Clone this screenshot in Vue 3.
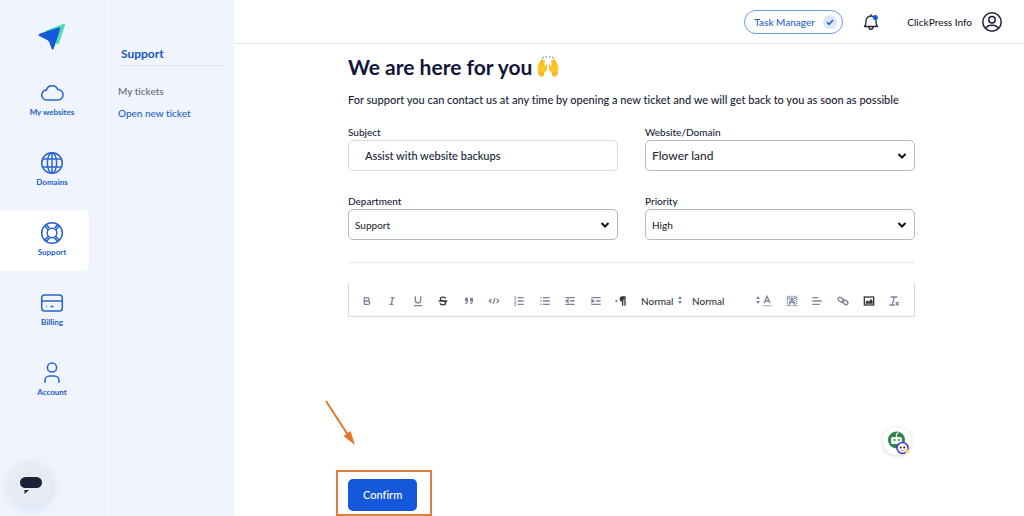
<script setup>
import { ref } from 'vue'

const subject = ref('Assist with website backups')
const message = ref('')

const nav = [
  { label: 'My websites', icon: '<path d="M7 19a5 5 0 0 1-.6-10 6 6 0 0 1 11.4-.4A5.2 5.2 0 0 1 18 19Z"/>' },
  { label: 'Domains', icon: '<circle cx="12" cy="12" r="10.3"/><ellipse cx="12" cy="12" rx="4.6" ry="10.3"/><path d="M12 2v20M3 8h18M3 16h18"/>' },
  { label: 'Support', active: true, icon: '<circle cx="12" cy="12" r="10.3"/><circle cx="12" cy="12" r="4.8"/><path d="m4.6 5 3.8 3.8M6.4 3.9l3 3M19.4 5l-3.8 3.8M17.6 3.9l-3 3M4.6 19l3.8-3.8M6.4 20.1l3-3M19.4 19l-3.8-3.8M17.6 20.1l-3-3"/>' },
  { label: 'Billing', icon: '<rect x="1.7" y="4" width="20.6" height="16" rx="3"/><path d="M2 10h20M6.3 15.5h.8M10.5 15.5h3"/>' },
  { label: 'Account', icon: '<circle cx="12" cy="6.5" r="4.6"/><path d="M5 22v-2.5a4.5 4.5 0 0 1 4.5-4.5h5a4.5 4.5 0 0 1 4.5 4.5V22"/>' },
]

const fields = [
  { id: 'domain', label: 'Website/Domain', value: 'Flower land', large: true },
  { id: 'department', label: 'Department', value: 'Support' },
  { id: 'priority', label: 'Priority', value: 'High' },
]

const tools = [
  { name: 'Bold', icon: '<path d="M5 4h4.5a2.5 2.5 0 0 1 0 5H5ZM5 9h5.5a2.5 2.5 0 0 1 0 5H5Z"/>' },
  { name: 'Italic', icon: '<path d="M7 4h6M5 14h6M8 14l2-10"/>' },
  { name: 'Underline', icon: '<path d="M5 2v6a4 4 0 0 0 8 0V2M3 16h12"/>' },
  { name: 'Strike', dark: true, icon: '<path d="M13 5.5C12.500 2.500 5 2.500 5 6c0 4 8 2 8 6 0 3.500-7.500 3.500-8.500.5M2.500 9h13"/>' },
  { name: 'Quote', icon: '<path class="solid" d="M3 4h4.500v5c0 3-1.500 4.500-4 5v-2c1.200-.5 1.800-1.300 1.800-2.500H3ZM10.500 4H15v5c0 3-1.500 4.500-4 5v-2c1.200-.5 1.800-1.300 1.800-2.500h-2.300Z"/>' },
  { name: 'Code', icon: '<path d="M5 6 2 9l3 3M13 6l3 3-3 3M10.500 5l-3 8"/>' },
  { name: 'Ordered list', icon: '<path d="M7 4h9M7 9h9M7 14h9"/><path class="thin" d="M2 3l1.500-1v4M2 6h3M2 8.500c2-1.500 3 0 0 2.500h3M2 13h2.500L3 14.500c2.500 0 2 2-1 1.500"/>' },
  { name: 'Bullet list', icon: '<path d="M6 4h10M6 9h10M6 14h10M2 4h2M2 9h2M2 14h2"/>' },
  { name: 'Decrease indent', icon: '<path d="M2 4h14M9 9h7M2 14h14M6 7v4L3 9Z"/>' },
  { name: 'Increase indent', icon: '<path d="M2 4h14M9 9h7M2 14h14M3 7v4l3-2Z"/>' },
  { name: 'Text direction', dark: true, icon: '<path class="solid" d="m1 7 3 2-3 2ZM16 2h-5a4 4 0 0 0 0 8Z"/><path d="M11.500 3v13M15 3v13"/>' },
]

const endTools = [
  { name: 'Background color', icon: '<rect class="dots" x="2" y="2" width="14" height="14"/><path class="dots" d="M5 2v14M13 2v14M2 5h14"/><path d="m5.500 14 3.500-9 3.500 9M7 11h4"/>' },
  { name: 'Align', icon: '<path d="M2 4h9M2 9h14M2 14h11"/>' },
  { name: 'Link', icon: '<rect x="1.500" y="4.500" width="9" height="5.500" rx="2.700" transform="rotate(35 6 7)"/><rect x="7.500" y="8" width="9" height="5.500" rx="2.700" transform="rotate(35 12 11)"/>' },
  { name: 'Image', dark: true, icon: '<rect x="2" y="3" width="14" height="12"/><path class="solid" d="M4 13v-3l2.500-2 2 2L12 6l2.500 3v4Z"/>' },
  { name: 'Clear formatting', icon: '<path d="M4 3h10M9.500 3l-3 11M2 15h8M11.500 10.500l4.500 5M16 10.500l-4.500 5"/>' },
]
</script>

<template>
  <div class="page">
    <aside class="sidebar">
      <a class="logo" href="#" aria-label="Home">
        <svg viewBox="0 0 28 28" width="28" height="28">
          <path fill="#50dfb0" d="M7 8 25.500.8q2-.6 1.500 1.400L21 20q-.7 2-3 1Z" />
          <path fill="#1558db" d="M1.300 10.700 20.700 4.600q2.200-.5 1.400 1.700L15.800 25.500q-1.100 2.300-2.300 0l-2.200-6.300q-.5-1.200-1.700-2L1.400 13q-1.500-1.300-.1-2.300Z" />
        </svg>
      </a>
      <nav class="nav">
        <a v-for="item in nav" :key="item.label" href="#" class="nav-item" :class="{ active: item.active }">
          <svg class="nav-icon" viewBox="0 0 24 24" v-html="item.icon"></svg>
          <span>{{ item.label }}</span>
        </a>
      </nav>
    </aside>

    <aside class="subnav">
      <h2>Support</h2>
      <a href="#" class="muted">My tickets</a>
      <a href="#">Open new ticket</a>
    </aside>

    <div class="body">
      <header class="topbar">
        <button type="button" class="task">
          Task Manager
          <svg viewBox="0 0 14 14" width="14" height="14">
            <circle cx="7" cy="7" r="7" fill="#dbe6fc" />
            <path d="m4 7.300 2 2 4-4.300" fill="none" stroke="#2462d0" stroke-width="1.500" />
          </svg>
        </button>
        <button type="button" class="plain bell" aria-label="Notifications">
          <svg viewBox="0 0 16 18" width="16" height="18" fill="none" stroke="#20253a" stroke-width="1.300" stroke-linejoin="round">
            <path d="M1.500 13.500c1.700-1.500 1.500-3 1.500-5.500a5 5 0 0 1 10 0c0 2.500-.2 4 1.500 5.500ZM6 14c0 3 4 3 4 0M8 3V1.200" />
            <circle cx="12.300" cy="4.500" r="2.500" fill="#1558db" stroke="none" />
          </svg>
        </button>
        <button type="button" class="plain user">
          ClickPress Info
          <svg viewBox="0 0 20 20" width="20" height="20" fill="none" stroke="#1b2036" stroke-width="1.500">
            <circle cx="10" cy="10" r="9.200" />
            <circle cx="10" cy="7.700" r="3.200" />
            <path d="M4 16.500c.7-4.500 11.300-4.500 12 0" />
          </svg>
        </button>
      </header>

      <main class="content">
        <h1>
          We are here for you
          <svg class="hands" viewBox="0 0 22 22" width="22" height="22" role="img" aria-label="Raised hands">
            <g fill="#fbc42d">
              <path d="M1 16.500C.2 13 .5 10 2 7l2.800-4.500q1-1.200 1.200.3L5.700 5 7 4q1-.3.800.8L7.500 9l.7 2 .6-2.500q1.600-.8 1.500 1L9.800 14 7 17.300V20q-2.500 1.500-5 0Z" />
              <path d="M21 16.500C21.800 13 21.500 10 20 7l-2.800-4.500q-1-1.200-1.200.3l.3 2.200L15 4q-1-.3-.8.8l.3 4.200-.7 2-.6-2.500q-1.600-.8-1.500 1l.5 4.500 2.800 3.300V20q2.500 1.500 5 0Z" />
            </g>
            <path d="M2.300 17.500q2.300 1 4.700 0M15 17.500q2.400 1 4.700 0M4 8.500l1.700-4M18 8.500l-1.700-4" fill="none" stroke="#e39b18" stroke-width=".7" />
            <path d="m6.500 2-.7-1.200M9.300 1.500 9 .2M12.700 1.500l.3-1.300M15.500 2l.7-1.200" stroke="#4d5873" />
          </svg>
        </h1>
        <p class="intro">For support you can contact us at any time by opening a new ticket and we will get back to you as soon as possible</p>

        <form @submit.prevent>
          <div class="grid">
            <div class="field">
              <label for="subject">Subject</label>
              <input id="subject" v-model="subject" type="text" />
            </div>
            <div v-for="field in fields" :key="field.id" class="field">
              <label :for="field.id">{{ field.label }}</label>
              <div class="select">
                <select :id="field.id" :class="{ large: field.large }">
                  <option>{{ field.value }}</option>
                </select>
                <svg viewBox="0 0 10 8" width="10" height="8"><path d="m1.500 2 3.500 3.500L8.500 2" fill="none" stroke="#11131c" stroke-width="2" /></svg>
              </div>
            </div>
          </div>

          <hr />

          <div class="toolbar" role="toolbar" aria-label="Formatting">
            <div class="group main-group">
              <button v-for="tool in tools" :key="tool.name" type="button" class="tool" :class="{ dark: tool.dark }" :aria-label="tool.name">
                <svg viewBox="0 0 18 18" v-html="tool.icon"></svg>
              </button>
            </div>
            <div class="picker size">
              <select aria-label="Size"><option>Normal</option></select>
              <svg viewBox="0 0 6 10" width="6" height="10"><path d="m1 4 2-3 2 3ZM1 6l2 3 2-3Z" /></svg>
            </div>
            <div class="picker heading">
              <select aria-label="Heading"><option>Normal</option></select>
              <svg viewBox="0 0 6 10" width="6" height="10"><path d="m1 4 2-3 2 3ZM1 6l2 3 2-3Z" /></svg>
            </div>
            <button type="button" class="tool color" aria-label="Text color">
              <svg viewBox="0 0 18 18"><path d="m4.500 12 4.500-10 4.500 10M6 9h6" /><path class="thin" d="M2 16h14" /></svg>
            </button>
            <div class="group end-group">
              <button v-for="tool in endTools" :key="tool.name" type="button" class="tool" :class="{ dark: tool.dark }" :aria-label="tool.name">
                <svg viewBox="0 0 18 18" v-html="tool.icon"></svg>
              </button>
            </div>
          </div>

          <div class="editor">
            <textarea v-model="message" aria-label="Message"></textarea>
            <button type="button" class="plain assistant" aria-label="Writing assistant">
              <svg viewBox="0 0 28 28" width="28" height="28">
                <circle cx="14" cy="14" r="14" fill="#fff" />
                <circle cx="13.500" cy="13" r="8.500" fill="#2c8549" />
                <rect x="8" y="10" width="11" height="7" rx="1.500" fill="#f0f8f2" />
                <path d="M13.500 10V7l2-1.500" fill="none" stroke="#f0f8f2" stroke-width="1.200" />
                <path d="M10.500 13h2M15 13h2" stroke="#2c8549" stroke-width="1.500" />
                <circle cx="19.500" cy="21" r="5.500" fill="#fff" stroke="#4b35cf" stroke-width="1.500" />
                <circle cx="17.700" cy="20.500" r="1" fill="#282555" />
                <circle cx="21.200" cy="20.500" r="1" fill="#282555" />
                <path d="M17.500 23q2 1.500 4 0" fill="none" stroke="#d66999" />
                <path d="m24 21 1 2 2 .2-1.600 1.500.4 2-1.800-1-2 1 .5-2L21 23l2-.2Z" fill="#f8cf72" />
              </svg>
            </button>
          </div>

          <div class="actions">
            <svg class="arrow" viewBox="0 0 32 46" width="32" height="46">
              <path d="M2 1 24 35" stroke="#e0752b" stroke-width="2" />
              <path d="m31 45-11.500-9 3.500-2.300L26.500 31Z" fill="#e0752b" />
            </svg>
            <span class="frame"></span>
            <button type="submit" class="confirm">Confirm</button>
          </div>
        </form>
      </main>
    </div>

    <button type="button" class="plain chat" aria-label="Open chat">
      <svg viewBox="0 0 22 18" width="22" height="18" fill="#1b2235">
        <rect width="22" height="11" rx="5.500" />
        <path d="M4.500 13h4.500l-4.500 4Z" />
      </svg>
    </button>
  </div>
</template>

<style>
body {
  margin: 0;
  overflow: hidden;
}
</style>

<style scoped>
* {
  box-sizing: border-box;
}
.page {
  display: flex;
  height: 100vh;
  font: 500 10px/14px Lato, "Open Sans", sans-serif;
  font-variant-ligatures: none;
  color: #191d35;
  background: #fff;
}
button,
input,
select,
textarea {
  font: inherit;
  font-variant-ligatures: none;
  color: inherit;
}
a {
  color: #2160c8;
  text-decoration: none;
}
.plain {
  border: 0;
  padding: 0;
  background: none;
}
.sidebar {
  flex: 0 0 106px;
  background: #f0f4fe;
  border-right: 1px solid #ebeffb;
}
.logo {
  display: block;
  width: 28px;
  height: 28px;
  margin: 23px 0 19px 38px;
}
.logo svg,
.tool svg {
  display: block;
}
.nav {
  display: flex;
  flex-direction: column;
  gap: 9px;
}
.nav-item {
  display: flex;
  flex-direction: column;
  align-items: center;
  gap: 1px;
  width: 89px;
  height: 61px;
  padding: 11px 0 0 15px;
  border-radius: 0 6px 6px 0;
  font-size: 8px;
  font-weight: 700;
  line-height: 12px;
  white-space: nowrap;
}
.nav-item.active {
  background: #fff;
}
.nav-icon {
  width: 24px;
  height: 24px;
  fill: none;
  stroke: #2864ce;
  stroke-width: 1.500;
}
.subnav {
  flex: 0 0 128px;
  display: flex;
  flex-direction: column;
  gap: 8px;
  padding: 46px 10px 0 12px;
  background: #f0f4fe;
}
.subnav h2 {
  margin: 0 0 10px;
  padding: 0 0 3px 3px;
  border-bottom: 1px solid #e0e5f4;
  color: #1558c4;
  font-size: 12px;
  font-weight: 700;
  line-height: 16px;
}
.subnav .muted {
  color: #666a73;
}
.body {
  flex: 1;
  min-width: 0;
}
.topbar {
  display: flex;
  justify-content: flex-end;
  align-items: center;
  height: 44px;
  padding-right: 22px;
  border-bottom: 1px solid #dceef2;
}
.task {
  display: flex;
  align-items: center;
  justify-content: space-between;
  width: 99px;
  height: 24px;
  padding: 0 5px 0 9px;
  border: 1px solid #6e9de0;
  border-radius: 12px;
  background: #fff;
  color: #2864ce;
  white-space: nowrap;
}
.bell {
  display: flex;
  margin: 0 28px 0 20px;
}
.user {
  display: flex;
  align-items: center;
  gap: 10px;
}
.content {
  padding: 10px 109px 0 114px;
}
h1 {
  display: flex;
  align-items: center;
  gap: 5px;
  margin: 0;
  font-size: 21px;
  font-weight: 700;
  line-height: 26px;
  color: #12163a;
}
.intro {
  margin: 12px 0 17px;
  font-size: 11px;
  line-height: 16px;
  white-space: nowrap;
}
.grid {
  display: grid;
  grid-template-columns: 1fr 1fr;
  gap: 23px 27px;
}
.field label {
  display: block;
  margin-bottom: 1px;
}
.field input,
.field select {
  display: block;
  width: 100%;
  height: 31px;
  padding: 0 16px;
  border: 1px solid #d9dbe1;
  border-radius: 5px;
  background: #fff;
  font-size: 11px;
}
.field select {
  appearance: none;
  padding: 0 6px;
  border-color: #b5b8bd;
  color: #2c2e35;
  font-size: 10px;
}
.field select.large {
  font-size: 12px;
}
.select,
.picker {
  position: relative;
}
.select svg {
  position: absolute;
  right: 8px;
  top: 12px;
  pointer-events: none;
}
hr {
  margin: 22px 0 20px;
  border: 0;
  border-top: 1px solid #e5e7f2;
}
.toolbar {
  display: flex;
  align-items: center;
  height: 34px;
  padding: 2px 7px 0 5px;
  border: 1px solid #d8dae0;
  border-top: 0;
}
.group {
  display: flex;
}
.main-group {
  flex: 280;
}
.end-group {
  flex: 128;
}
.group .tool {
  flex: 1;
}
.tool {
  display: flex;
  justify-content: center;
  border: 0;
  padding: 0;
  background: none;
}
.tool svg {
  width: 12px;
  height: 12px;
  fill: none;
  stroke: #7d8499;
  stroke-width: 2;
}
.tool.dark svg {
  stroke: #35373d;
}
.tool :deep(.solid) {
  fill: #7d8499;
  stroke: none;
}
.tool.dark :deep(.solid) {
  fill: #35373d;
}
.tool :deep(.thin) {
  stroke-width: 1;
}
.tool :deep(.dots) {
  stroke-dasharray: 1.500 1.500;
}
.color {
  flex: 0 0 12px;
  margin-right: 6px;
}
.picker select {
  display: block;
  width: 100%;
  padding: 0;
  border: 0;
  appearance: none;
  background: none;
  color: #35373d;
}
.picker svg {
  position: absolute;
  right: 0;
  top: 1px;
  fill: #7d8499;
  pointer-events: none;
}
.size {
  width: 42px;
  margin: 0 9px 0 7px;
}
.heading {
  width: 69px;
}
.editor {
  position: relative;
  height: 162px;
}
.editor textarea {
  display: block;
  width: 100%;
  height: 100%;
  padding: 10px;
  border: 0;
  resize: none;
  background: none;
}
.assistant {
  position: absolute;
  right: 4px;
  bottom: 24px;
  display: flex;
  border-radius: 50%;
  box-shadow: 0 1px 4px #0000002b;
}
.actions {
  position: relative;
  width: fit-content;
}
.confirm {
  display: block;
  height: 32px;
  padding: 0 15px;
  border: 0;
  border-radius: 5px;
  background: #1558db;
  color: #fff;
  font-size: 11px;
}
.frame {
  position: absolute;
  inset: -9px -15px -5px -12px;
  border: 2px solid #dc7d42;
  pointer-events: none;
}
.arrow {
  position: absolute;
  left: -24px;
  top: -79px;
}
.chat {
  position: fixed;
  left: 9px;
  bottom: 10px;
  display: flex;
  align-items: center;
  justify-content: center;
  width: 44px;
  height: 44px;
  padding-top: 4px;
  border-radius: 50%;
  background: #e8ebf2;
  box-shadow: 0 3px 12px #6b8fa433;
}
</style>
